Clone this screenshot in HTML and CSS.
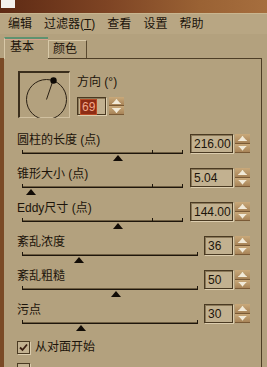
FILE: index.html
```html
<!DOCTYPE html>
<html lang="zh-CN">
<head>
    <meta charset="UTF-8">
    <title>滤镜 - 基本</title>
    <link rel="stylesheet" href="styles.css">
</head>
<body>
    <div class="titlebar"><span class="logo"></span></div>

    <ul class="menubar">
        <li>编辑</li>
        <li>过滤器(<u>T</u>)</li>
        <li>查看</li>
        <li>设置</li>
        <li>帮助</li>
    </ul>

    <div class="tabs">
        <div class="tab active">基本</div>
        <div class="tab">颜色</div>
    </div>

    <div class="page">
        <div class="panel">
            <div class="direction">
                <div class="dial">
                    <svg width="50" height="45" viewBox="0 0 50 45">
                        <circle cx="26.5" cy="26.5" r="20" fill="none" stroke="#2a2014" stroke-width="1"/>
                        <line x1="26.5" y1="26.5" x2="33" y2="7.5" stroke="#2a2014" stroke-width="1"/>
                        <circle cx="33.5" cy="7.5" r="3.2" fill="#0e0a06"/>
                    </svg>
                </div>
                <div class="dir-field">
                    <div class="label">方向 (°)</div>
                    <div class="field">
                        <div class="input short"><span class="sel">69</span></div>
                        <div class="spin"><span class="up"></span><span class="down"></span></div>
                    </div>
                </div>
            </div>

            <!-- sliders -->
            <div class="row">
                <div class="slider-col">
                    <div class="label">圆柱的长度 (点)</div>
                    <div class="track">
                        <i class="tick" style="left: 130px"></i>
                        <b class="thumb" style="left: 91px"></b>
                    </div>
                </div>
                <div class="field">
                    <div class="input">216.00</div>
                    <div class="spin"><span class="up"></span><span class="down"></span></div>
                </div>
            </div>

            <div class="row">
                <div class="slider-col">
                    <div class="label">锥形大小 (点)</div>
                    <div class="track">
                        <i class="tick" style="left: 130px"></i>
                        <b class="thumb" style="left: 4px"></b>
                    </div>
                </div>
                <div class="field">
                    <div class="input">5.04</div>
                    <div class="spin"><span class="up"></span><span class="down"></span></div>
                </div>
            </div>

            <div class="row">
                <div class="slider-col">
                    <div class="label">Eddy尺寸 (点)</div>
                    <div class="track">
                        <i class="tick" style="left: 130px"></i>
                        <b class="thumb" style="left: 91px"></b>
                    </div>
                </div>
                <div class="field">
                    <div class="input">144.00</div>
                    <div class="spin"><span class="up"></span><span class="down"></span></div>
                </div>
            </div>

            <div class="row">
                <div class="slider-col">
                    <div class="label">紊乱浓度</div>
                    <div class="track wide">
                        <b class="thumb" style="left: 52px"></b>
                    </div>
                </div>
                <div class="field">
                    <div class="input short">36</div>
                    <div class="spin"><span class="up"></span><span class="down"></span></div>
                </div>
            </div>

            <div class="row">
                <div class="slider-col">
                    <div class="label">紊乱粗糙</div>
                    <div class="track wide">
                        <b class="thumb" style="left: 89px"></b>
                    </div>
                </div>
                <div class="field">
                    <div class="input short">50</div>
                    <div class="spin"><span class="up"></span><span class="down"></span></div>
                </div>
            </div>

            <div class="row">
                <div class="slider-col">
                    <div class="label">污点</div>
                    <div class="track wide">
                        <b class="thumb" style="left: 54px"></b>
                    </div>
                </div>
                <div class="field">
                    <div class="input short">30</div>
                    <div class="spin"><span class="up"></span><span class="down"></span></div>
                </div>
            </div>

            <label class="check">
                <span class="box checked">
                    <svg width="11" height="11" viewBox="0 0 11 11">
                        <path d="M2 5.5 L4.5 8 L9 2.5" fill="none" stroke="#3a1e10" stroke-width="1.8"/>
                    </svg>
                </span>
                从对面开始
            </label>
            <label class="check">
                <span class="box"></span>
            </label>
        </div>
    </div>
</body>
</html>
```

FILE: styles.css
```css
html, body {
    margin: 0;
    padding: 0;
}
body {
    width: 267px;
    height: 367px;
    overflow: hidden;
    background: #b3a17e;
    color: #1c140a;
    font-family: "Liberation Sans", "Noto Sans CJK SC", sans-serif;
    font-size: 12px;
    line-height: 14px;
}

/* top strip */
.titlebar {
    height: 14px;
    background: linear-gradient(90deg, #5e2a14, #7e4424 40%, #9a6234 75%, #a66e3e);
    border-bottom: 1px solid #c9b690;
    box-sizing: border-box;
}
.logo {
    display: block;
    width: 14px;
    height: 8px;
    margin-left: 1px;
    background: #f4f2ee;
}

.menubar {
    display: flex;
    list-style: none;
    margin: 0;
    padding: 0 0 0 2px;
    height: 20px;
    align-items: center;
    background: #b8a683;
}
.menubar li {
    padding: 0 6px;
}
.menubar u {
    text-decoration: underline;
}

/* tabs */
.tabs {
    display: flex;
    align-items: flex-end;
    height: 24px;
    padding-left: 4px;
}
.tab {
    position: relative;
    box-sizing: border-box;
    height: 18px;
    padding: 1px 0 0 4px;
    width: 39px;
    border-top: 1px solid #d8c9a8;
    border-left: 1px solid #d8c9a8;
    border-right: 1px solid #5a4a30;
    background: #b3a17e;
}
.tab.active {
    z-index: 1;
    height: 22px;
    width: 44px;
    margin-bottom: -1px;
    padding-left: 5px;
    border-top: 2px solid #5f9270;
    box-shadow: inset 0 1px 0 #d9a08c;
    border-right: none;
}

/* page */
.page {
    border-left: 4px solid #7a4a26;
}
.panel {
    margin-right: 5px;
    border-top: 1px solid #4e3e26;
    border-right: 1px solid #4e3e26;
    padding: 12px 11px 0 13px;
}

.direction {
    display: flex;
    gap: 7px;
    margin-bottom: 15px;
}
.dial {
    width: 52px;
    height: 47px;
    box-sizing: border-box;
    margin-left: 1px;
    border-top: 2px solid #3a2e1c;
    border-left: 2px solid #3a2e1c;
    border-right: 1px solid #d0c0a0;
    border-bottom: 1px solid #d0c0a0;
}
.dial svg {
    display: block;
}
.dir-field {
    padding-top: 4px;
}
.dir-field .field {
    margin-top: 8px;
}
.dir-field .input {
    width: 30px;
    height: 18px;
    margin-top: 0;
}

/* slider rows */
.row {
    display: flex;
    height: 34px;
}
.slider-col {
    flex: none;
}
.track {
    position: relative;
    width: 161px;
    height: 8px;
    margin: 6px 0 0 5px;
    border-top: 1px solid #1e160c;
    box-shadow: 0 -1px 0 #6e5e42;
}
.track.wide {
    width: 176px;
}
.track::before,
.track::after,
.tick {
    content: "";
    position: absolute;
    top: -4px;
    width: 1px;
    height: 4px;
    background: #1e160c;
}
.track::before {
    left: 0;
}
.track::after {
    right: 0;
}
.thumb {
    position: absolute;
    top: 1px;
    width: 0;
    height: 0;
    border-left: 5px solid transparent;
    border-right: 5px solid transparent;
    border-bottom: 6px solid #120c06;
}

/* number fields */
.field {
    display: flex;
    margin-left: auto;
    align-items: flex-start;
}
.input {
    box-sizing: border-box;
    width: 43px;
    height: 19px;
    margin-top: 1px;
    padding: 2px 0 0 3px;
    background: #c2b190;
    border: 1px solid #4a3a22;
    box-shadow: 1px 1px 0 #dccdae, inset 1px 1px 0 #8a7858;
    font-size: 12px;
    line-height: 14px;
}
.input.short {
    width: 29px;
}
.sel {
    display: inline-block;
    padding: 0 1px;
    background: #8e2c14;
    color: #f2a98a;
    outline: 1px solid #b84a24;
}
.spin {
    display: flex;
    flex-direction: column;
    width: 15px;
    height: 19px;
    margin: 1px 0 0 2px;
}
.dir-field .spin {
    margin: 0 0 0 3px;
    height: 18px;
}
.spin span {
    position: relative;
    flex: 1;
    background: linear-gradient(#c9a97a, #a88458);
    border-bottom: 1px solid #7a5a36;
}
.spin span::after {
    content: "";
    position: absolute;
    left: 3px;
    width: 7px;
    height: 3px;
    border: 1px solid #f2ead8;
}
.spin .up::after {
    top: 2px;
    border-bottom: 1px solid #f2ead8;
    clip-path: polygon(50% 0, 100% 100%, 0 100%);
    background: #f2ead8;
}
.spin .down::after {
    top: 2px;
    clip-path: polygon(0 0, 100% 0, 50% 100%);
    background: #f2ead8;
}

/* checkboxes */
.check {
    display: flex;
    align-items: center;
    gap: 5px;
    margin: 3px 0 0 0;
    height: 14px;
}
.check + .check {
    margin-top: 8px;
}
.box {
    box-sizing: border-box;
    width: 13px;
    height: 13px;
    background: #c2b190;
    border: 1px solid #4a3a22;
    box-shadow: 1px 1px 0 #dccdae;
}
.box svg {
    display: block;
}
```
